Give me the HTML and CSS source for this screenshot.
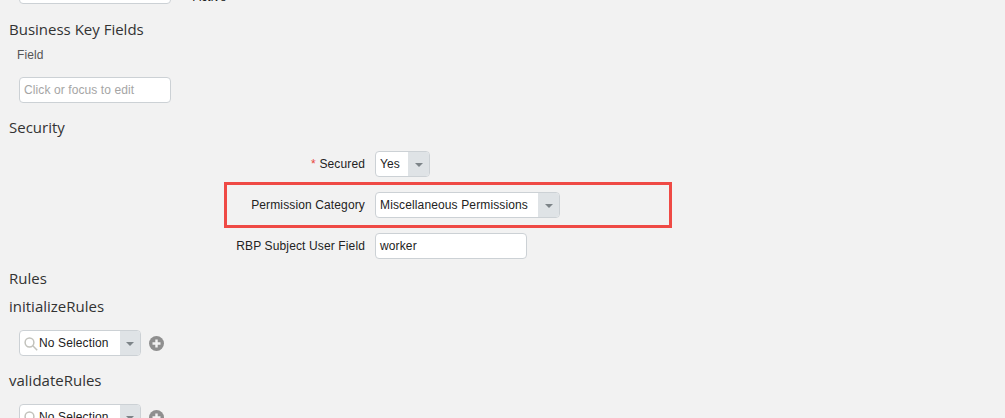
FILE: index.html
```html
<!DOCTYPE html>
<html lang="en">
<head>
<meta charset="utf-8">
<title>Object Definition</title>
<link rel="stylesheet" href="styles.css">
</head>
<body>
<main class="page">
  <div class="top-row">
    <div class="input input-top"></div>
    <span class="cut-text">Active</span>
  </div>

  <h2 class="heading heading-business">Business Key Fields</h2>
  <div class="field-label">Field</div>
  <div class="indent indent-field"><div class="input input-short placeholder">Click or focus to edit</div></div>

  <h2 class="heading heading-security">Security</h2>
  <div class="form">
    <div class="row">
      <div class="label"><span class="req">*</span> Secured</div>
      <div class="combo combo-yes">
        <span class="combo-value">Yes</span>
        <span class="combo-btn"><svg class="caret" width="8" height="4" viewBox="0 0 8 4"><path d="M0 0h8L4 4z"/></svg></span>
      </div>
    </div>
    <div class="row row-marked">
      <div class="label">Permission Category</div>
      <div class="combo combo-perm">
        <span class="combo-value">Miscellaneous Permissions</span>
        <span class="combo-btn"><svg class="caret" width="8" height="4" viewBox="0 0 8 4"><path d="M0 0h8L4 4z"/></svg></span>
      </div>
      <div class="highlight"></div>
    </div>
    <div class="row">
      <div class="label">RBP Subject User Field</div>
      <div class="input input-short value">worker</div>
    </div>
  </div>

  <h2 class="heading heading-rules">Rules</h2>
  <h2 class="heading heading-init">initializeRules</h2>
  <div class="indent lookup-row">
    <div class="combo combo-lookup">
      <svg class="search" width="14" height="14" viewBox="0 0 14 14"><circle cx="5.5" cy="5.5" r="4.4"/><path d="M8.8 8.8l4.4 4.4"/></svg>
      <span class="combo-value">No Selection</span>
      <span class="combo-btn"><svg class="caret" width="8" height="4" viewBox="0 0 8 4"><path d="M0 0h8L4 4z"/></svg></span>
    </div>
    <svg class="add" width="15" height="15" viewBox="0 0 15 15"><circle cx="7.5" cy="7.5" r="7.5"/><path d="M7.5 3.5v8M3.5 7.5h8"/></svg>
  </div>
  <h2 class="heading heading-validate">validateRules</h2>
  <div class="indent lookup-row">
    <div class="combo combo-lookup">
      <svg class="search" width="14" height="14" viewBox="0 0 14 14"><circle cx="5.5" cy="5.5" r="4.4"/><path d="M8.8 8.8l4.4 4.4"/></svg>
      <span class="combo-value">No Selection</span>
      <span class="combo-btn"><svg class="caret" width="8" height="4" viewBox="0 0 8 4"><path d="M0 0h8L4 4z"/></svg></span>
    </div>
    <svg class="add" width="15" height="15" viewBox="0 0 15 15"><circle cx="7.5" cy="7.5" r="7.5"/><path d="M7.5 3.5v8M3.5 7.5h8"/></svg>
  </div>
</main>
</body>
</html>
```
FILE: styles.css
```css
html, body {
  margin: 0;
  height: 418px;
  overflow: hidden;
  background: #f2f2f2;
}
body {
  font-family: "Liberation Sans", Arial, sans-serif;
  font-size: 12px;
  letter-spacing: 0.13px;
  color: #222;
}
.page {
  margin-top: -22px;
}
.top-row {
  display: flex;
  align-items: flex-end;
  height: 26px;
  padding-left: 19px;
}
.cut-text {
  margin-left: 22px;
  line-height: 14px;
  margin-bottom: 0;
}
.input {
  box-sizing: border-box;
  height: 26px;
  background: #fff;
  border: 1px solid #ccd1d5;
  border-radius: 4px;
  padding-left: 4px;
  line-height: 24px;
}
.input-top { width: 152px; }
.input-short { width: 152px; }
.placeholder { color: #a5a5a5; letter-spacing: 0.1px; }
.value { color: #222; }
.heading {
  margin: 0;
  padding-left: 9px;
  font-family: "Open Sans", sans-serif;
  font-size: 15px;
  font-weight: 400;
  letter-spacing: 0;
  line-height: 20px;
  color: #333;
}
.heading-business { margin-top: 15px; }
.field-label {
  margin-top: 9px;
  padding-left: 17px;
  line-height: 14px;
  color: #555;
  letter-spacing: 0.1px;
}
.indent { padding-left: 19px; }
.indent-field { margin-top: 15px; }
.heading-security { margin-top: 14px; }
.form {
  display: flex;
  flex-direction: column;
  gap: 15px;
  margin-top: 14px;
}
.row {
  display: flex;
  align-items: center;
  gap: 10px;
  position: relative;
}
.label {
  width: 365px;
  text-align: right;
}
.req { color: #e8463c; }
.combo {
  box-sizing: border-box;
  display: flex;
  align-items: stretch;
  height: 26px;
  background: #fff;
  border: 1px solid #ccd1d5;
  border-radius: 4px;
  overflow: hidden;
}
.combo-value {
  flex: 1;
  padding-left: 4px;
  line-height: 24px;
  white-space: nowrap;
}
.combo-btn {
  display: flex;
  align-items: center;
  justify-content: center;
  width: 21px;
  background: #dfe3e6;
}
.caret { fill: #7d8488; margin-top: 2px; }
.combo-yes { width: 55px; }
.combo-perm { width: 185px; }
.highlight {
  position: absolute;
  left: 224px;
  top: -10px;
  box-sizing: border-box;
  width: 448px;
  height: 46px;
  border: 3px solid #ef4a45;
}
.heading-rules { margin-top: 9px; }
.heading-init { margin-top: 8px; }
.lookup-row {
  display: flex;
  align-items: center;
  gap: 8px;
  margin-top: 14px;
}
.combo-lookup { width: 122px; padding-left: 4px; }
.combo-lookup .combo-value { padding-left: 1px; }
.combo-lookup .combo-btn { width: 20px; flex: none; }
.search {
  align-self: center;
  flex: none;
  margin-top: 2px;
  fill: none;
  stroke: #c2c2bc;
  stroke-width: 1.5;
}
.add { fill: #8f8f8f; stroke: #f2f2f2; stroke-width: 2.4; }
.add circle { stroke: none; }
.heading-validate { margin-top: 14px; }
```
